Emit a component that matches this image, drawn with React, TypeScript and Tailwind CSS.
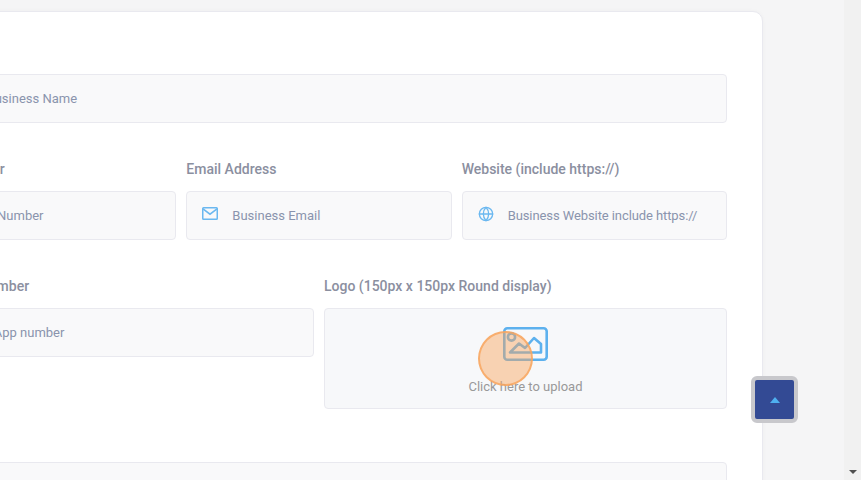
import React from 'react';
import { Globe, Phone, Building2, MessageCircle } from 'lucide-react';

const MailIcon = () => (
  <svg width="16" height="13" viewBox="0 0 16 13" fill="none" stroke="#6bb8f0" strokeWidth="1.5">
    <rect x="0.75" y="0.75" width="14.5" height="11.5" rx="0.8" />
    <path d="M1 1.8l7 5.4 7-5.4" />
  </svg>
);

const Label = ({ children }: { children: React.ReactNode }) => (
  <label className="block h-[22px] mb-[11px] text-[14px] leading-[22px] font-medium text-[#8b8f9f] whitespace-nowrap">{children}</label>
);

const Field = ({ icon, placeholder, tight }: { icon: React.ReactNode; placeholder: string; tight?: boolean }) => (
  <div className="flex items-center h-[49px] pl-[15px] bg-[#f9f9fa] border border-[#e9e9ef] rounded-[4px]">
    <span className="flex justify-center w-[16px] mr-[14px] -mt-[4px] shrink-0">{icon}</span>
    <input
      readOnly
      placeholder={placeholder}
      className={`flex-1 min-w-0 bg-transparent outline-none text-[13px] text-[#8a94ad] placeholder:text-[#8a94ad] ${tight ? 'tracking-[-0.09px]' : ''}`}
    />
  </div>
);

export default function App() {
  return (
    <div className="flex h-screen overflow-hidden bg-[#f5f5f6] font-['Roboto',sans-serif]">
      <div className="relative flex-1 min-w-0 overflow-hidden">
        <div className="w-[888px] ml-[-125px] mt-[11px] pt-[62px] pr-[35px] pl-[35px] pb-10 bg-white border border-[#e9e9ef] rounded-[10px] shadow-[0_0_4px_rgba(0,0,0,0.03)]">
          <Field icon={<Building2 size={16} color="#6bb8f0" />} placeholder="Your Business Name" />

          <div className="grid grid-cols-3 gap-x-[10px] mt-[35px]">
            <div>
              <Label>Phone Number</Label>
              <Field icon={<Phone size={16} color="#6bb8f0" />} placeholder="Phone Number" />
            </div>
            <div>
              <Label>Email Address</Label>
              <Field icon={<MailIcon />} placeholder="Business Email" />
            </div>
            <div>
              <Label>Website (include https://)</Label>
              <Field tight icon={<Globe size={18} color="#6bb8f0" />} placeholder="Business Website include https://" />
            </div>
          </div>

          <div className="grid grid-cols-2 gap-x-[10px] mt-[35px]">
            <div>
              <Label>WhatsApp Number</Label>
              <Field icon={<MessageCircle size={16} color="#6bb8f0" />} placeholder="WhatsApp number" />
            </div>
            <div>
              <Label>Logo (150px x 150px Round display)</Label>
              <div className="flex flex-col items-center h-[101px] pt-[18px] bg-[#f7f8fa] border border-[#e9e9ef] rounded-[4px]">
                <svg width="45" height="34" viewBox="0 0 45 34" fill="none" stroke="#5db1ee" strokeWidth="2.6" strokeLinejoin="round">
                  <rect x="1.3" y="1.3" width="42.4" height="31.4" rx="3" />
                  <circle cx="8.5" cy="10" r="3.6" />
                  <path d="M7 25.5l9-9 6 4.5 9-10 7 6v8.500z" />
                </svg>
                <span className="mt-[17px] text-[13px] leading-[18px] text-[#999999]">Click here to upload</span>
              </div>
            </div>
          </div>

          <div className="h-[49px] mt-[53px] bg-[#f9f9fa] border border-[#e9e9ef] rounded-[4px]" />
        </div>

        {/* click marker */}
        <div className="absolute left-[478px] top-[331px] w-[55px] h-[55px] rounded-full bg-[#f9a45c]/45 border-2 border-[#f9a45c]/80" />

        {/* back to top */}
        <button className="absolute left-[751px] top-[376px] w-[47px] h-[47px] flex items-center justify-center bg-[#334a94] border-[4px] border-[#c8c8cc] rounded-[6px]">
          <span className="w-0 h-0 border-x-[5px] border-x-transparent border-b-[6px] border-b-[#4fb0f0]" />
        </button>
      </div>

      {/* scrollbar */}
      <div className="flex flex-col justify-end items-center w-[17px] shrink-0 bg-[#f1f1f1] pb-[6px]">
        <span className="w-0 h-0 border-x-[4px] border-x-transparent border-t-[4px] border-t-[#505050]" />
      </div>
    </div>
  );
}
